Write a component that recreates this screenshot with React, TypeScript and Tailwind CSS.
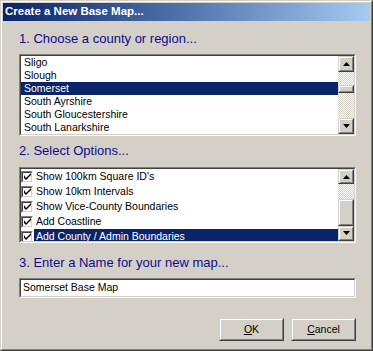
import React from "react"

const counties = ["Sligo", "Slough", "Somerset", "South Ayrshire", "South Gloucestershire", "South Lanarkshire"]
const options = [
  "Show 100km Square ID's",
  "Show 10km Intervals",
  "Show Vice-County Boundaries",
  "Add Coastline",
  "Add County / Admin Boundaries",
]

function Sunken({ className = "", children }: { className?: string; children: React.ReactNode }) {
  return (
    <div className={`border border-t-[#808080] border-l-[#808080] border-r-white border-b-white ${className}`}>
      <div className="h-full border border-t-[#404040] border-l-[#404040] border-r-[#d4d0c8] border-b-[#d4d0c8] bg-white overflow-hidden">
        {children}
      </div>
    </div>
  )
}

function Raised({ className = "", children }: { className?: string; children?: React.ReactNode }) {
  return (
    <div className={`border border-t-[#d4d0c8] border-l-[#d4d0c8] border-r-[#404040] border-b-[#404040] bg-[#d4d0c8] ${className}`}>
      <div className="h-full flex items-center justify-center border border-t-white border-l-white border-r-[#808080] border-b-[#808080]">
        {children}
      </div>
    </div>
  )
}

function Arrow({ up }: { up?: boolean }) {
  return (
    <svg width="7" height="4" viewBox="0 0 7 4" className={up ? "" : "rotate-180"}>
      <path d="M3.5 0 L7 4 L0 4 Z" fill="#000" />
    </svg>
  )
}

function ScrollBar({ trackTop, thumb, trackBottom }: { trackTop: number; thumb: number; trackBottom: number }) {
  const checker = "bg-[repeating-conic-gradient(#d4d0c8_0%_25%,#ffffff_0%_50%)] bg-[length:2px_2px]"
  return (
    <div className="w-[16px] flex flex-col shrink-0">
      <Raised className="h-[16px]">
        <Arrow up />
      </Raised>
      <div className={checker} style={{ height: trackTop }} />
      <Raised className="shrink-0" >
        <div style={{ height: thumb - 4 }} />
      </Raised>
      <div className={`${checker} flex-1`} style={{ minHeight: trackBottom }} />
      <Raised className="h-[16px]">
        <Arrow />
      </Raised>
    </div>
  )
}

function Check() {
  return (
    <div className="w-[12px] h-[12px] shrink-0 border border-t-[#808080] border-l-[#808080] border-r-white border-b-white">
      <div className="w-full h-full bg-white border border-t-[#404040] border-l-[#404040] border-r-[#d4d0c8] border-b-[#d4d0c8] flex items-center justify-center">
        <svg width="7" height="7" viewBox="0 0 7 7">
          <path d="M0 2 L0 5 L2 7 L7 2 L7 0 L2 5 Z" fill="#000" />
        </svg>
      </div>
    </div>
  )
}

export default function App() {
  return (
    <div
      className="w-[373px] h-[351px] bg-[#d4d0c8] border border-t-[#d4d0c8] border-l-[#d4d0c8] border-r-[#404040] border-b-[#404040] text-black"
      style={{ fontFamily: '"Liberation Sans", Arial, sans-serif' }}
    >
      <div className="h-full border border-t-white border-l-white border-r-[#808080] border-b-[#808080] p-[1px] flex flex-col">
        <div className="h-[18px] bg-linear-to-r from-[#0a246a] to-[#a6caf0] flex items-center pl-[2px] text-white font-bold text-[11.5px] leading-none">
          Create a New Base Map...
        </div>

        <div className="pl-[16px] flex flex-col">
          <div className="mt-[10px] h-[16px] leading-[16px] text-[13px] text-[#0c0c8c]">1. Choose a county or region...</div>
          <Sunken className="mt-[7px] w-[337px] h-[82px]">
            <div className="flex h-full">
              <div className="flex-1 text-[10.5px]">
                {counties.map((c) => (
                  <div
                    key={c}
                    className={`h-[13px] leading-[13px] pl-[3px] ${c === "Somerset" ? "bg-[#0a246a] text-white" : ""}`}
                  >
                    {c}
                  </div>
                ))}
              </div>
              <ScrollBar trackTop={13} thumb={8} trackBottom={10} />
            </div>
          </Sunken>

          <div className="mt-[7px] h-[16px] leading-[16px] text-[13px] text-[#0c0c8c]">2. Select Options...</div>
          <Sunken className="mt-[8px] w-[337px] h-[76px]">
            <div className="flex h-full">
              <div className="flex-1 text-[10.5px]">
                {options.map((o, i) => (
                  <div key={o} className="h-[15px] flex items-center">
                    <Check />
                    <div
                      className={`h-full flex-1 leading-[15px] pl-[2px] ml-[1px] ${i === options.length - 1 ? "bg-[#0a246a] text-white" : ""}`}
                    >
                      {o}
                    </div>
                  </div>
                ))}
              </div>
              <ScrollBar trackTop={15} thumb={27} trackBottom={0} />
            </div>
          </Sunken>

          <div className="mt-[12px] h-[16px] leading-[16px] text-[13px] text-[#0c0c8c]">3. Enter a Name for your new map...</div>
          <Sunken className="mt-[7px] w-[337px] h-[20px]">
            <div className="h-full flex items-center pl-[2px] text-[10.5px]">Somerset Base Map</div>
          </Sunken>

          <div className="mt-[20px] w-[337px] flex justify-end gap-[7px]">
            <Raised className="w-[65px] h-[23px]">
              <span className="text-[10.5px]">
                <span className="underline">O</span>K
              </span>
            </Raised>
            <Raised className="w-[65px] h-[23px]">
              <span className="text-[10.5px]">
                <span className="underline">C</span>ancel
              </span>
            </Raised>
          </div>
        </div>
      </div>
    </div>
  )
}
